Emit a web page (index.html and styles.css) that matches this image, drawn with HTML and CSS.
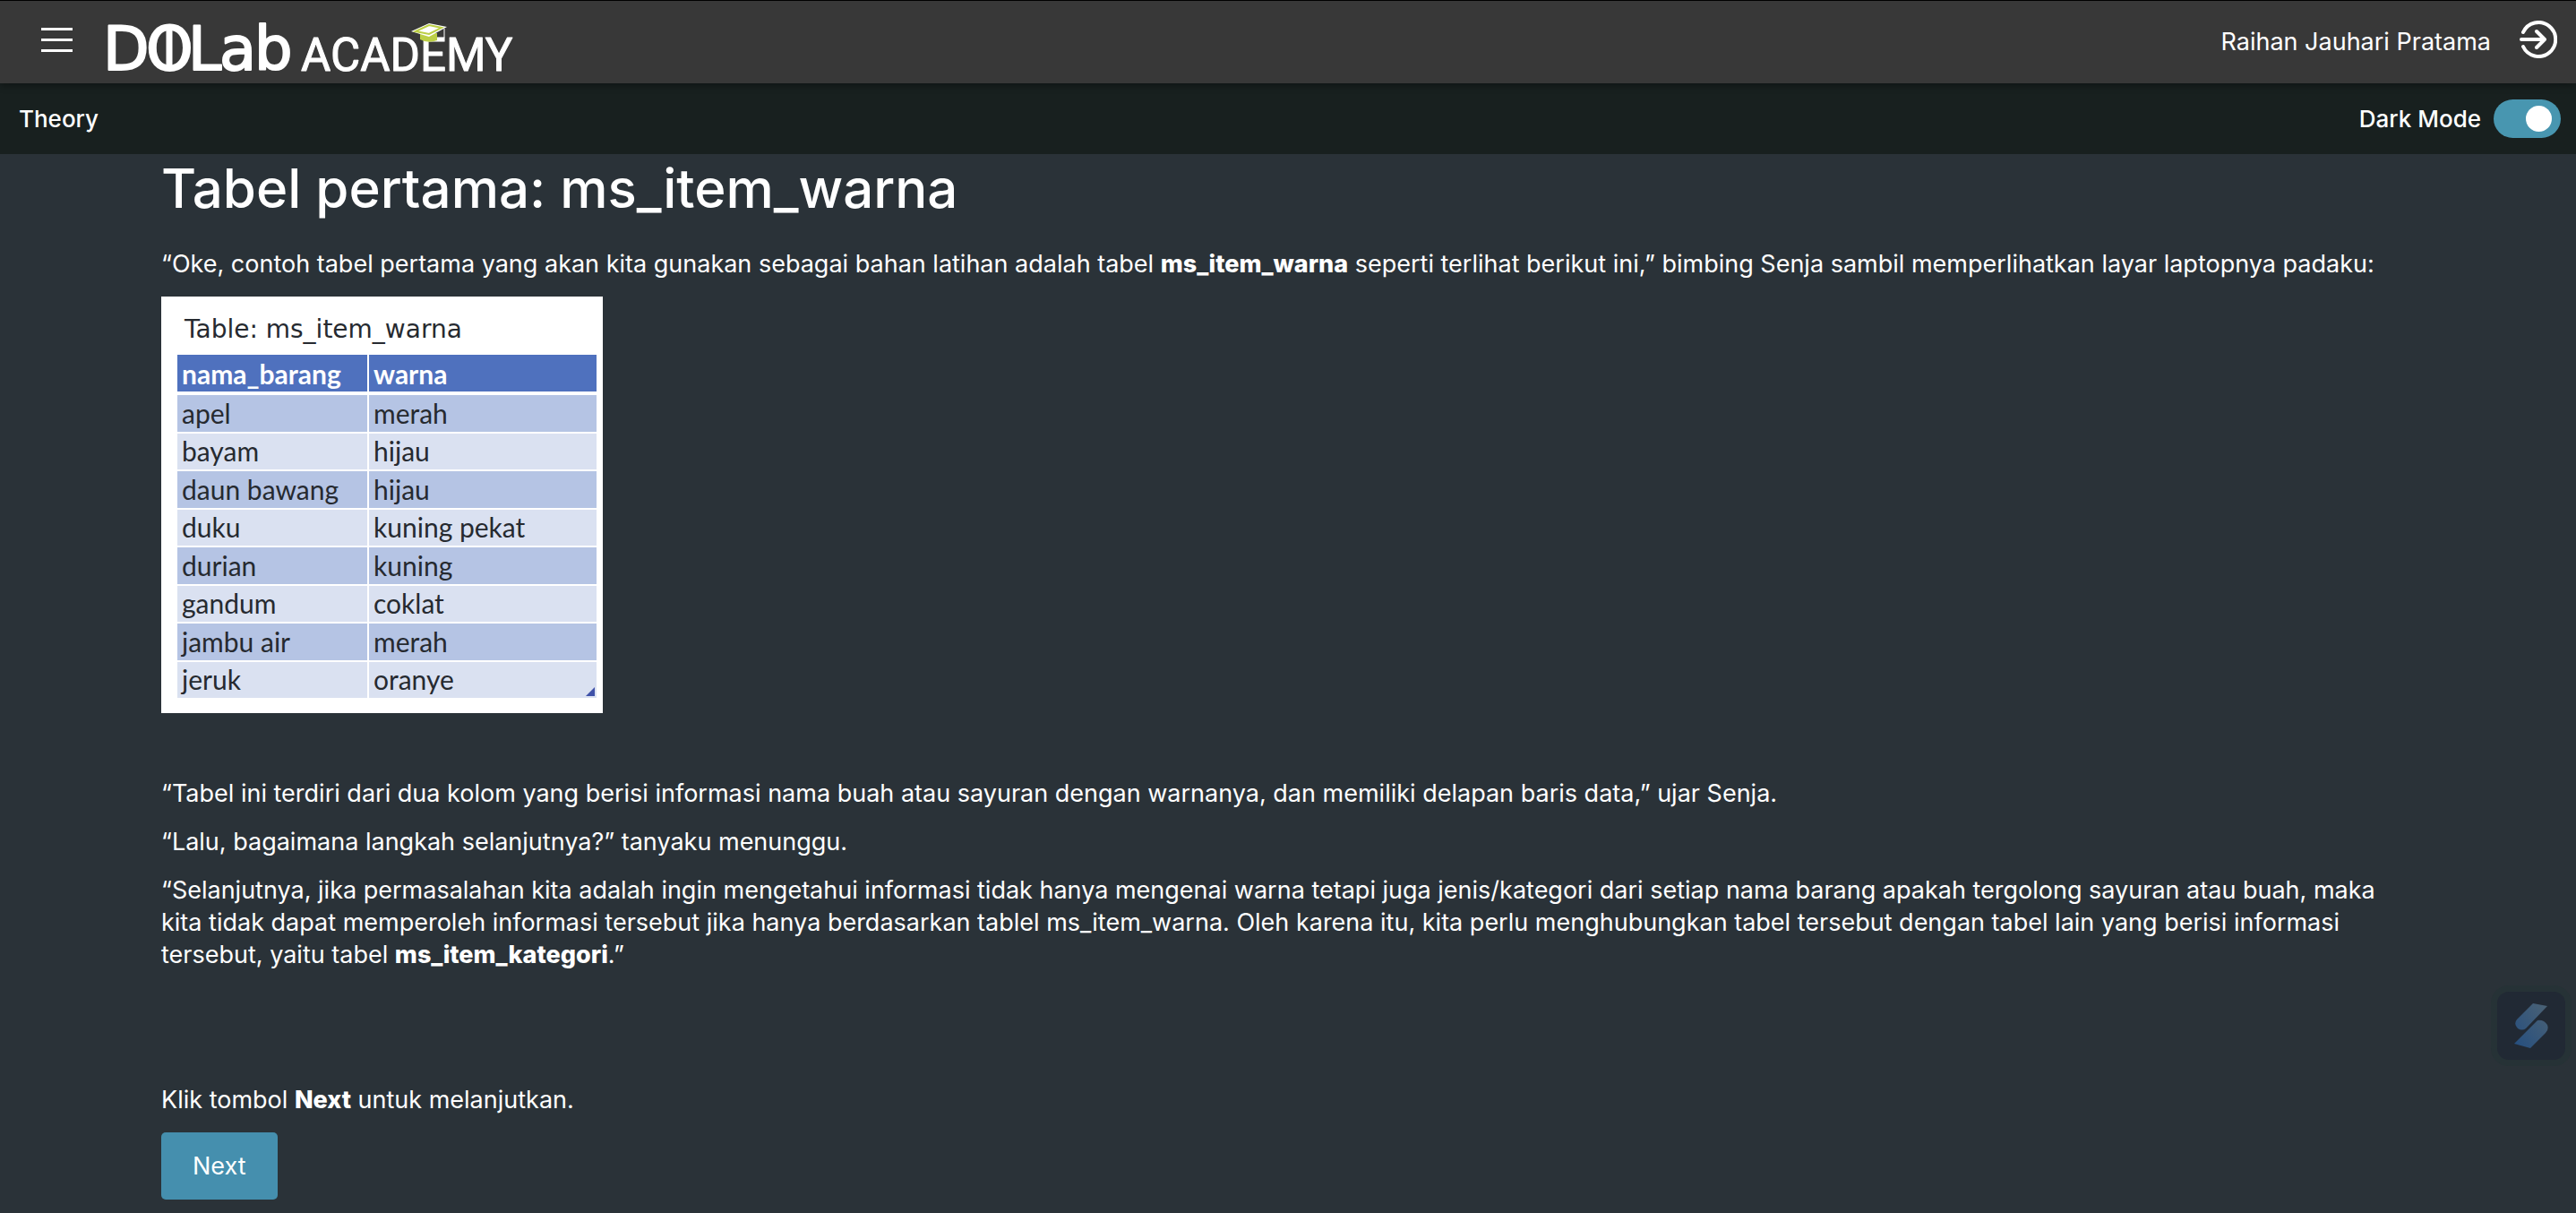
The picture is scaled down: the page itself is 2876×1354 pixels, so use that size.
FILE: index.html
```html
<!DOCTYPE html>
<html lang="id">
<head>
<meta charset="utf-8">
<meta name="viewport" content="width=device-width, initial-scale=1">
<title>Tabel pertama: ms_item_warna</title>
<link rel="stylesheet" href="styles.css">
</head>
<body>
<header class="topbar">
  <button class="icon-button menu" type="button" aria-label="Menu"><span class="menu-bar"></span><span class="menu-bar"></span><span class="menu-bar"></span></button>
  <a class="logo" href="#" aria-label="DQLab Academy">
    <svg width="476" height="92" viewBox="-10 -22 476 92">
      <g class="logo-text">
        <text class="logo-big" y="55" x="-7 41 88 123 162">DOLab</text>
        <text class="logo-small" y="56" x="214">ACADEMY</text>
      </g>
      <path d="M67 6V56" stroke="#fff" stroke-width="7"/>
      <path d="M347 13v8q9 5 19 1v-8z" fill="#bccf45"/>
      <path d="M337 12 357 3 377 7 357 18Z" fill="#fff"/>
      <path d="M342 12 357 5 371 8 357 15Z" fill="none" stroke="#bccf45" stroke-width="2"/>
      <path d="M374 9v10" stroke="#fff" stroke-width="1"/>
    </svg>
  </a>
  <span class="user">Raihan Jauhari Pratama</span>
  <button class="icon-button" type="button" aria-label="Keluar">
    <svg width="42" height="42" viewBox="0 0 42 42" fill="none" stroke="#fff" stroke-width="4" stroke-linecap="round" stroke-linejoin="round"><path d="M4 13A19 19 0 1 1 4 29M2 21H28M19 12 28 21 19 30"/></svg>
  </button>
</header>
<div class="subbar">
  <span>Theory</span>
  <label class="mode">Dark Mode <input class="switch" type="checkbox" role="switch" checked></label>
</div>
<main class="content">
  <h1>Tabel pertama: ms_item_warna</h1>
  <p>“Oke, contoh tabel pertama yang akan kita gunakan sebagai bahan latihan adalah tabel <strong>ms_item_warna</strong> seperti terlihat berikut ini,” bimbing Senja sambil memperlihatkan layar laptopnya padaku:</p>
  <div class="sheet">
    <table>
      <caption>Table: ms_item_warna</caption>
      <thead><tr><th scope="col">nama_barang</th><th scope="col">warna</th></tr></thead>
      <tbody>
        <tr><td>apel</td><td>merah</td></tr>
        <tr><td>bayam</td><td>hijau</td></tr>
        <tr><td>daun bawang</td><td>hijau</td></tr>
        <tr><td>duku</td><td>kuning pekat</td></tr>
        <tr><td>durian</td><td>kuning</td></tr>
        <tr><td>gandum</td><td>coklat</td></tr>
        <tr><td>jambu air</td><td>merah</td></tr>
        <tr><td>jeruk</td><td class="last">oranye</td></tr>
      </tbody>
    </table>
  </div>
  <p>“Tabel ini terdiri dari dua kolom yang berisi informasi nama buah atau sayuran dengan warnanya, dan memiliki delapan baris data,” ujar Senja.</p>
  <p>“Lalu, bagaimana langkah selanjutnya?” tanyaku menunggu.</p>
  <p>“Selanjutnya, jika permasalahan kita adalah ingin mengetahui informasi tidak hanya mengenai warna tetapi juga jenis/kategori dari setiap nama barang apakah tergolong sayuran atau buah, maka kita tidak dapat memperoleh informasi tersebut jika hanya berdasarkan tablel ms_item_warna. Oleh karena itu, kita perlu menghubungkan tabel tersebut dengan tabel lain yang berisi informasi tersebut, yaitu tabel <strong>ms_item_kategori</strong>.”</p>
  <p class="hint">Klik tombol <strong>Next</strong> untuk melanjutkan.</p>
  <button class="next" type="button">Next</button>
</main>
<button class="widget" type="button" aria-label="Asisten">
  <svg width="38" height="50" viewBox="0 0 38 50">
    <defs><linearGradient id="blue" x1="0" y1="1" x2="1" y2="0"><stop offset="0" stop-color="#244e80"/><stop offset="1" stop-color="#4c6274"/></linearGradient></defs>
    <path d="M21 0 37 3 13 28Q9 31 4 28Q-1 23 3 18ZM26 19Q33 18 37 24Q39 29 35 33L18 50 0 45Z" fill="url(#blue)"/>
  </svg>
</button>
</body>
</html>
```
FILE: styles.css
```css
* { box-sizing: border-box; }

body {
  margin: 0;
  min-height: 100vh;
  background: #2a3238;
  color: #fff;
  font: 27px/36px Inter, "Open Sans", sans-serif;
}

button { font: inherit; color: inherit; border: 0; cursor: pointer; }
strong { font-weight: 800; }

.topbar {
  position: relative;
  display: flex;
  align-items: center;
  height: 93px;
  padding: 0 21px 0 46px;
  background: #383838;
  border-top: 1px solid #000;
  box-shadow: 0 2px 8px rgba(0, 0, 0, 0.4);
}

.icon-button { display: flex; margin: 0 0 6px; padding: 0; background: none; }
.menu { flex-direction: column; gap: 9px; }
.menu-bar { width: 35px; height: 3px; background: #fff; }
.logo { display: flex; margin: 0 auto 0 31px; }
.logo-text { fill: #fff; stroke: #fff; stroke-linejoin: round; font-family: Roboto, sans-serif; }
.logo-big { font-family: "DejaVu Sans", sans-serif; font-size: 67px; stroke-width: 2; }
.logo-small { font-size: 51px; stroke-width: 1; }
.user { margin-right: 32px; }

.subbar {
  display: flex;
  justify-content: space-between;
  align-items: center;
  height: 79px;
  padding: 0 17px 0 21px;
  background: #18201f;
  font-size: 26px;
  font-weight: 500;
}

.mode { display: flex; align-items: center; gap: 14px; }

.switch {
  appearance: none;
  width: 75px;
  height: 43px;
  margin: 0;
  padding: 7px 10px;
  border-radius: 22px;
  background: #4896b0;
  display: flex;
}

.switch::before {
  content: "";
  width: 29px;
  height: 29px;
  border-radius: 50%;
  background: #fff;
}

.switch:checked { justify-content: flex-end; }

.content { padding: 0 180px 15px; }
h1 { margin: 0 0 29px; font-size: 60px; line-height: 76px; font-weight: 500; }
p { margin: 0 0 18px; }

.sheet {
  width: 493px;
  margin-bottom: 72px;
  padding: 12px 5px 15px 16px;
  background: #fff;
  color: #262a30;
  font: 30px/36px Lato, sans-serif;
}

table { width: 100%; border-spacing: 2px; table-layout: fixed; }
caption { height: 51px; padding-left: 10px; text-align: left; font: 28px/50px "DejaVu Sans", sans-serif; }
th, td { height: 40px; padding: 0 0 2px 5px; text-align: left; background: #dae1f1; }
th { width: 212px; height: 43px; padding-bottom: 0; border-bottom: 2px solid #fff; background: #4f71be; color: #fff; font-weight: 700; }
th + th { width: auto; }
tbody tr:nth-child(odd) td { height: 41px; background: #b5c4e4; }
.last { position: relative; }
.last::after { content: ""; position: absolute; right: 2px; bottom: 2px; border: 5px solid #3f51a8; border-top-color: transparent; border-left-color: transparent; }

.hint { margin-top: 126px; }
.next { height: 75px; padding: 0 35px; border-radius: 5px; background: #458fae; }

.widget {
  position: fixed;
  right: 5px;
  bottom: 164px;
  display: grid;
  place-items: center;
  width: 90px;
  height: 90px;
  padding: 0;
  border: 7px solid #263236;
  border-radius: 20px;
  background: #212934;
}
```
